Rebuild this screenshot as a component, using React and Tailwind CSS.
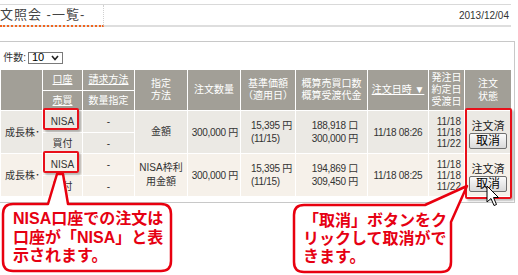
import React from "react";

const th = "bg-[#a29f97] text-white border border-white text-center font-normal p-0 leading-[12px]";
const td = "border border-white p-0 text-[#333] whitespace-nowrap";

const Row = ({ bg, method, units, amount, time }) => (
  <>
    <tr className={`${bg} h-[22px]`}>
      <td rowSpan={2} className={`${td} pl-[4px]`}>成長株･</td>
      <td className={`${td} text-center`}>NISA</td>
      <td className={`${td} text-center`}>-</td>
      <td rowSpan={2} className={`${td} text-center leading-[14px]`}>{method}</td>
      <td rowSpan={2} className={`${td} text-right pr-[2px] tracking-[-0.3px]`}>300,000 円</td>
      <td rowSpan={2} className={`${td} pl-[10px] leading-[13px] tracking-[-0.3px]`}>
        15,395 円<br />(11/15)
      </td>
      <td rowSpan={2} className={`${td} text-right pr-[9px] leading-[13px] tracking-[-0.3px]`}>
        {units} 口<br />{amount} 円
      </td>
      <td rowSpan={2} className={`${td} text-center tracking-[-0.3px]`}>{time}</td>
      <td rowSpan={2} className={`${td} text-right pr-[3px] leading-[11px]`}>
        11/18<br />11/18<br />11/22
      </td>
      <td rowSpan={2} className={`${td} align-top`}>
        <div className="flex flex-col items-center pt-[9px]">
          <span className="leading-[12px] text-[11px] text-[#222]">注文済</span>
          <span className="mt-[1px] flex h-[16px] w-[38px] items-center justify-center rounded-[2px] border border-[#6f6f6f] bg-linear-to-b from-[#fbfbfb] to-[#d9d9d9] text-[12px] leading-none text-black">
            取消
          </span>
        </div>
      </td>
    </tr>
    <tr className={`${bg} h-[21px]`}>
      <td className={`${td} text-center`}>買付</td>
      <td className={`${td} text-center`}>-</td>
    </tr>
  </>
);

const App = () => {
  return (
    <div className="relative h-[275px] w-[518px] overflow-hidden bg-white font-['Liberation_Sans','Noto_Sans_CJK_JP',sans-serif] text-[10px] text-[#333]">
      {/* title bar */}
      <div className="mt-[4px] flex h-[23px] w-[511px] items-stretch justify-between border-t border-[#d9d9d9] border-b-2 border-b-[#dedede]">
        <div className="-mb-[2px] flex w-[104px] items-center border-b-2 border-b-[#f0641e] border-r border-r-[#d0d0d0] border-dotted text-[13px] tracking-[1px] text-[#444]">
          文照会 -一覧-
        </div>
        <div className="flex items-center pr-[2px] text-[10px] text-[#333]">2013/12/04</div>
      </div>

      {/* panel */}
      <div className="mt-[14px] h-[162px] w-[515px] border-t border-r border-b border-[#c8c8c8]">
        <div className="mt-[8px] flex items-center">
          <div className="w-[26px] whitespace-nowrap text-right">件数:</div>
          <div className="ml-[2px] flex h-[12px] w-[35px] items-center justify-between border border-[#7a7a7a] px-[3px] text-[11px] leading-none text-black">
            <span>10</span>
            <svg width="8" height="6" viewBox="0 0 8 6">
              <path d="M1 1 L4 4.5 L7 1" fill="none" stroke="#222" strokeWidth="1.6" />
            </svg>
          </div>
        </div>

        <table className="mt-[4px] w-[511px] table-fixed border-collapse">
          <colgroup>
            <col className="w-[42px]" />
            <col className="w-[40px]" />
            <col className="w-[52px]" />
            <col className="w-[53px]" />
            <col className="w-[53px]" />
            <col className="w-[55px]" />
            <col className="w-[72px]" />
            <col className="w-[61px]" />
            <col className="w-[36px]" />
            <col className="w-[47px]" />
          </colgroup>
          <thead>
            <tr className="h-[21px]">
              <th rowSpan={2} className={th}></th>
              <th className={`${th} underline`}>口座</th>
              <th className={`${th} underline`}>請求方法</th>
              <th rowSpan={2} className={th}>
                指定<br />方法
              </th>
              <th rowSpan={2} className={th}>注文数量</th>
              <th rowSpan={2} className={th}>
                基準価額<br />（適用日）
              </th>
              <th rowSpan={2} className={th}>
                概算売買口数<br />概算受渡代金
              </th>
              <th rowSpan={2} className={`${th} underline`}>注文日時 ▼</th>
              <th rowSpan={2} className={`${th} leading-[11px]`}>
                発注日<br />約定日<br />受渡日
              </th>
              <th rowSpan={2} className={`${th} leading-[13px]`}>
                注文<br />状態
              </th>
            </tr>
            <tr className="h-[20px]">
              <th className={`${th} underline`}>売買</th>
              <th className={th}>数量指定</th>
            </tr>
          </thead>
          <tbody>
            <Row bg="bg-[#ebe9e4]" method="金額" units="188,918" amount="300,000" time="11/18 08:26" />
            <Row
              bg="bg-[#f6f1ea]"
              method={
                <>
                  NISA枠利<br />用金額
                </>
              }
              units="194,869"
              amount="309,450"
              time="11/18 08:25"
            />
          </tbody>
        </table>
      </div>

      {/* red highlight boxes */}
      <div className="absolute left-[43px] top-[108px] h-[22px] w-[36px] rounded-[2px] border-2 border-[#e8101a] shadow-[2px_2px_2px_rgba(0,0,0,0.25)]" />
      <div className="absolute left-[43px] top-[151px] h-[22px] w-[36px] rounded-[2px] border-2 border-[#e8101a] shadow-[2px_2px_2px_rgba(0,0,0,0.25)]" />
      <div className="absolute left-[465px] top-[108px] h-[91px] w-[47px] rounded-[2px] border-2 border-[#e8101a] shadow-[2px_2px_2px_rgba(0,0,0,0.25)]" />

      {/* callout bubbles */}
      <svg className="absolute left-0 top-0" width="518" height="275" viewBox="0 0 518 275">
        <path
          d="M13 204 H48 L57 174 L63 174 L68 204 H161 Q171 204 171 214 V261 Q171 271 161 271 H13 Q3 271 3 261 V214 Q3 204 13 204 Z"
          fill="#fff"
          stroke="#e8000f"
          strokeWidth="2.5"
          strokeLinejoin="round"
        />
        <path
          d="M304 205 H425 L467 186 L451 222 V262 Q451 272 441 272 H304 Q294 272 294 262 V215 Q294 205 304 205 Z"
          fill="#fff"
          stroke="#e8000f"
          strokeWidth="2.5"
          strokeLinejoin="round"
        />
      </svg>
      <div className="absolute left-[13px] top-[210px] text-[16px] font-bold leading-[18.5px] text-[#e60012]">
        NISA口座での注文は<br />口座が「NISA」と表<br />示されます。
      </div>
      <div className="absolute left-[303px] top-[212px] text-[16px] font-bold leading-[18px] text-[#e60012]">
        「取消」ボタンをク<br />リックして取消がで<br />きます。
      </div>

      {/* mouse pointer */}
      <svg className="absolute left-[486px] top-[185px]" width="14" height="22" viewBox="0 0 14 22">
        <path
          d="M1 1 L1 17 L5 13.5 L8 20.5 L10.5 19.5 L7.5 12.5 L12.5 12.5 Z"
          fill="#fff"
          stroke="#000"
          strokeWidth="1"
          strokeLinejoin="round"
        />
      </svg>
    </div>
  );
};

export default App;
